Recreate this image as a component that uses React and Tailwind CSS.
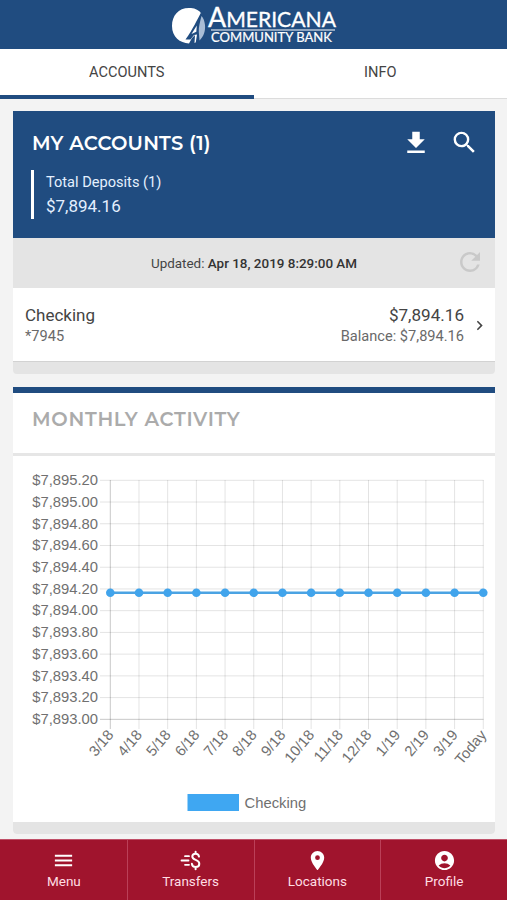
import React, { useState } from 'react';
import { MdSearch, MdRefresh, MdMenu, MdPlace, MdAccountCircle, MdChevronRight } from 'react-icons/md';

const months = ['3/18', '4/18', '5/18', '6/18', '7/18', '8/18', '9/18', '10/18', '11/18', '12/18', '1/19', '2/19', '3/19', 'Today'];
const amounts = ['$7,895.20', '$7,895.00', '$7,894.80', '$7,894.60', '$7,894.40', '$7,894.20', '$7,894.00', '$7,893.80', '$7,893.60', '$7,893.40', '$7,893.20', '$7,893.00'];

const Logo = () => (
  <svg width="166" height="49" viewBox="171 0 166 49" fill="#fff">
    <path d="M191 8 C179 7 172 15 172 26 C172 37 180 43 189 43.5 L192 38 L195 35 L194.5 43 C201 41 205 35 205 27 C205 15 200 9 191 8 Z" />
    <path d="M201 12.5 C197 20 193 29 185.5 39.5 L190.5 39.5 L194 35 L197 34.5 L195.5 44 L207 42 L207 18 Z" fill="#204c80" />
    <path d="M201.5 16 C200 22 198.5 27 198.8 32 L199.5 40.5 C204 36 205.5 31 205 25 C204.5 21 203.5 18 201.5 16 Z" fill="#a9bdd6" />
    <path d="M196.8 25.5 L191.5 34 L196.3 31.8 Z" />
    <text fontFamily="Lato, sans-serif" x="208" y="27" fontSize="20.5" textLength="128" lengthAdjust="spacingAndGlyphs" stroke="#fff" strokeWidth="0.3"><tspan fontSize="26">A</tspan>MERICANA</text>
    <rect x="211" y="29.5" width="124" height="1" />
    <text x="211" y="42" fontFamily="Lato, sans-serif" fontSize="12.4" textLength="121" lengthAdjust="spacingAndGlyphs" stroke="#fff" strokeWidth="0.2">COMMUNITY BANK</text>
  </svg>
);

const DownloadIcon = () => (
  <svg width="30" height="30" viewBox="0 0 24 24" fill="currentColor">
    <path d="M19 9h-4V3H9v6H5l7 7 7-7zM5 18v2h14v-2H5z" />
  </svg>
);

const TransferIcon = () => (
  <svg width="23" height="23" viewBox="0 0 23 23" fill="none" stroke="currentColor" strokeWidth="2" strokeLinecap="round">
    <path d="M6 7.2h4M2.5 11.5h7M6 15.8h4" strokeWidth="1.8" />
    <path d="M20 7.6C19.7 5.7 18.4 4.8 16.6 4.8C14.6 4.8 13.3 5.9 13.3 7.6C13.3 11.8 20.3 10 20.3 14.7C20.3 16.9 18.8 18 16.7 18C14.5 18 13.1 16.8 12.9 14.8M16.6 2.8v2M16.6 18v2.2" />
  </svg>
);

const ActivityChart = () => {
  const x = (i) => 97.3 + i * 28.69;
  const y = (i) => 24.3 + i * 21.73;

  return (
    <svg width="482" height="366" className="block" fontFamily="'Liberation Sans', Arial, sans-serif" fontSize="14.8" fill="#707070">
      {amounts.map((amount, i) => (
        <g key={amount}>
          <line x1="87" x2="470.5" y1={y(i)} y2={y(i)} stroke="#000" strokeOpacity={i === 11 ? 0.22 : 0.11} />
          <text x="85" y={y(i) + 4.8} textAnchor="end">{amount}</text>
        </g>
      ))}
      {months.map((month, i) => (
        <g key={month}>
          <line x1={x(i)} x2={x(i)} y1="24" y2="273" stroke="#000" strokeOpacity={i === 0 ? 0.22 : 0.11} />
          <text transform={`translate(${x(i) - 3} 273.5) rotate(-50)`} textAnchor="end" y="9">{month}</text>
        </g>
      ))}
      <line x1={x(0)} x2={x(13)} y1="136.8" y2="136.8" stroke="#4ba3e3" strokeWidth="2.5" />
      {months.map((month, i) => (
        <circle key={month} cx={x(i)} cy="136.8" r="4.3" fill="#41a4ec" />
      ))}
      <rect x="174.5" y="338" width="51.5" height="17" fill="#3fa7f2" />
      <text x="231.5" y="351.5">Checking</text>
    </svg>
  );
};

const navItems = [
  { label: 'Menu', icon: <MdMenu size={23} /> },
  { label: 'Transfers', icon: <TransferIcon /> },
  { label: 'Locations', icon: <MdPlace size={23} /> },
  { label: 'Profile', icon: <MdAccountCircle size={23} /> },
];

const App = () => {
  const [tab, setTab] = useState('ACCOUNTS');

  return (
    <div className="w-[507px] h-[900px] flex flex-col bg-[#f3f3f3] font-[Roboto,sans-serif] text-[#444] overflow-hidden">
      <header className="h-[49px] shrink-0 bg-[#204c80] flex justify-center pl-[1px]">
        <Logo />
      </header>

      <div className="h-[50px] shrink-0 flex bg-white border-b border-[#dcdcdc]">
        {['ACCOUNTS', 'INFO'].map((name) => (
          <button
            key={name}
            onClick={() => setTab(name)}
            className={`flex-1 h-[50px] pt-px text-[14.6px] text-[#444] border-b-4 ${tab === name ? 'border-[#204c80]' : 'border-transparent'}`}
          >
            {name}
          </button>
        ))}
      </div>

      <main className="flex-1 pt-3 pl-[13px] pr-3">
        <section className="rounded-b overflow-hidden">
          <div className="h-[127px] bg-[#204c80] text-white pl-[19px] pr-4 pt-[17px]">
            <div className="flex items-center justify-between h-[30px]">
              <h2 className="font-[Montserrat,Lato,sans-serif] font-semibold text-[19.5px] tracking-[0.2px] pt-0.5">MY ACCOUNTS (1)</h2>
              <div className="flex gap-[19px]">
                <DownloadIcon />
                <MdSearch size={29} />
              </div>
            </div>
            <div className="mt-3 -ml-px h-[49px] border-l-[3px] border-white pl-3 pt-px text-[#e4f0ff]">
              <div className="text-[14.6px] leading-[23px]">Total Deposits (1)</div>
              <div className="text-[17px] leading-6">$7,894.16</div>
            </div>
          </div>

          <div className="h-[50px] bg-[#e4e4e4] flex items-center justify-center relative pt-0.5 text-[13.45px]">
            <p>Updated: <span className="font-medium text-[#333]">Apr 18, 2019 8:29:00 AM</span></p>
            <MdRefresh size={30} className="absolute right-[10px] top-[9px] text-[#c9c9c9]" />
          </div>

          <div className="h-[73px] bg-white flex items-center justify-between pl-3 pr-1.5 pt-px">
            <div>
              <div className="text-[17px] leading-[22px]">Checking</div>
              <div className="text-[14.6px] leading-5 text-[#696969]">*7945</div>
            </div>
            <div className="flex items-center gap-1.5">
              <div className="text-right">
                <div className="text-[17.1px] leading-[22px]">$7,894.16</div>
                <div className="text-[14.6px] leading-5 text-[#696969]">Balance: $7,894.16</div>
              </div>
              <MdChevronRight size={19} />
            </div>
          </div>
          <div className="h-[13px] bg-[#e4e4e4] border-t border-[#d2d2d2]" />
        </section>

        <section className="mt-[13px] rounded-b overflow-hidden bg-white">
          <div className="h-[69px] border-t-[6px] border-t-[#204c80] border-b-[3px] border-b-[#e6e6e6] pl-[19px] pt-3">
            <h2 className="font-[Montserrat,Lato,sans-serif] font-semibold text-[19.5px] tracking-[0.7px] text-[#ababab]">MONTHLY ACTIVITY</h2>
          </div>
          <ActivityChart />
          <div className="h-3 bg-[#e4e4e4]" />
        </section>
      </main>

      <nav className="h-[61px] shrink-0 flex pl-px bg-[#a0142d] border-t border-[#c05068]">
        {navItems.map((item) => (
          <button key={item.label} className="flex-1 flex flex-col items-center pt-[9px] text-white border-l border-[#bb4058] first:border-l-0">
            {item.icon}
            <span className="text-[13.5px] leading-[18px] text-[#ffdde3]">{item.label}</span>
          </button>
        ))}
      </nav>
    </div>
  );
};

export default App;
